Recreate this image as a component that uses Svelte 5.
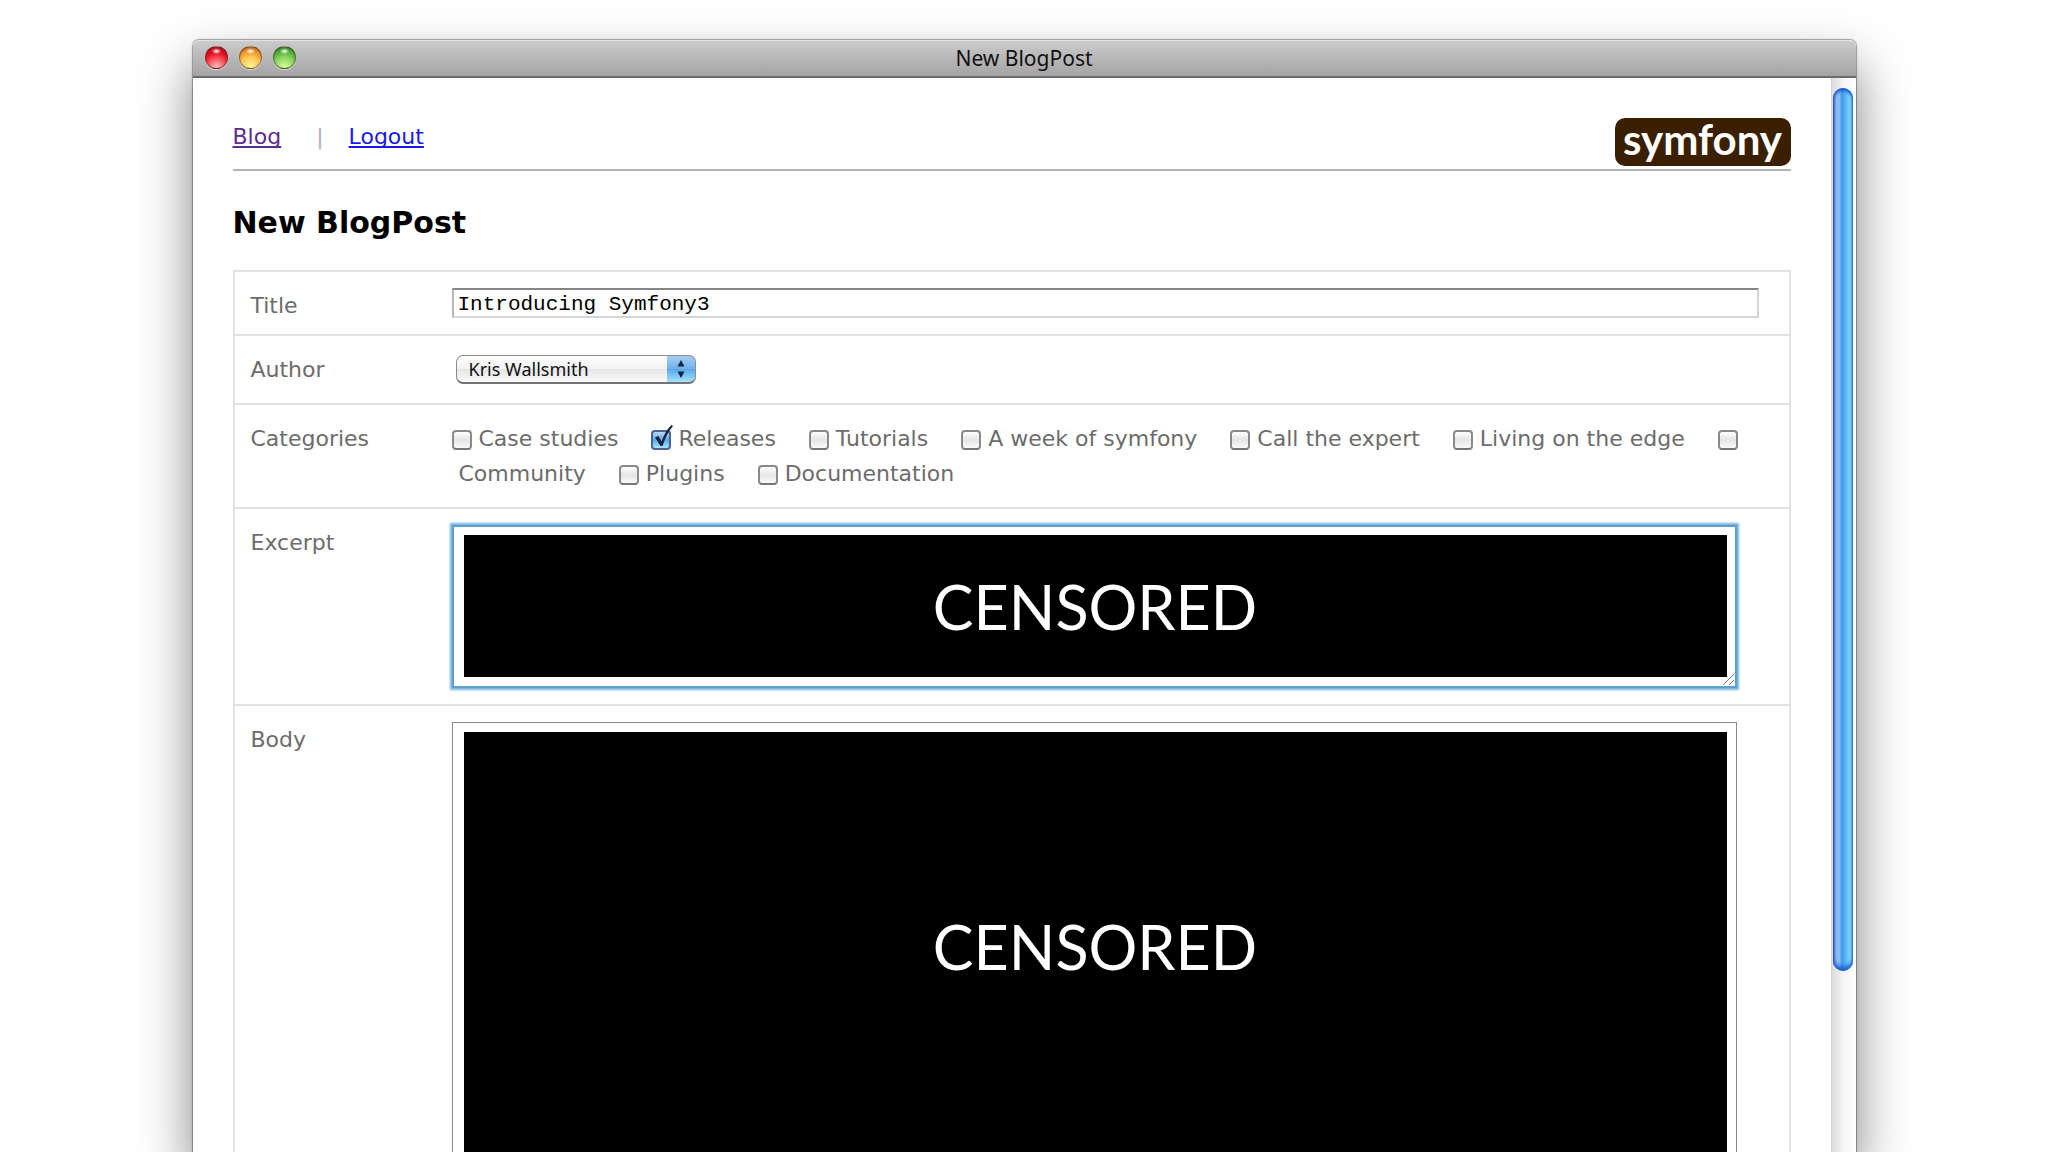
<script lang="ts">
	type Category = { id: string; name: string; checked: boolean };

	let title = $state('Introducing Symfony3');
	let author = $state('Kris Wallsmith');
	let excerpt = $state('');
	let body = $state('');

	let categories: Category[] = $state([
		{ id: 'case-studies', name: 'Case studies', checked: false },
		{ id: 'releases', name: 'Releases', checked: true },
		{ id: 'tutorials', name: 'Tutorials', checked: false },
		{ id: 'week', name: 'A week of symfony', checked: false },
		{ id: 'expert', name: 'Call the expert', checked: false },
		{ id: 'edge', name: 'Living on the edge', checked: false },
		{ id: 'community', name: 'Community', checked: false },
		{ id: 'plugins', name: 'Plugins', checked: false },
		{ id: 'documentation', name: 'Documentation', checked: false }
	]);
</script>

<div class="desktop">
	<div class="window">
		<div class="titlebar">
			<div class="lights">
				<button class="light red" aria-label="Close"></button>
				<button class="light yellow" aria-label="Minimize"></button>
				<button class="light green" aria-label="Zoom"></button>
			</div>
			<span class="window-title">New BlogPost</span>
		</div>

		<div class="view">
			<main>
				<header>
					<nav>
						<a class="visited" href="#blog">Blog</a>
						<span class="separator">|</span>
						<a href="#logout">Logout</a>
					</nav>
					<div class="logo">symfony</div>
				</header>

				<h1>New BlogPost</h1>

				<form onsubmit={(e) => e.preventDefault()}>
					<div class="row">
						<label for="title">Title</label>
						<div class="field">
							<input id="title" class="text" type="text" bind:value={title} />
						</div>
					</div>

					<div class="row">
						<label for="author">Author</label>
						<div class="field">
							<div class="select">
								<select id="author" bind:value={author}>
									<option>Kris Wallsmith</option>
								</select>
								<svg viewBox="0 0 28 28" aria-hidden="true">
									<path d="M10.500 11.500 14 5l3.500 6.500zM10.500 16.500h7L14 23z" fill="#10263f" />
								</svg>
							</div>
						</div>
					</div>

					<div class="row">
						<span class="label" id="categories">Categories</span>
						<div class="field categories" role="group" aria-labelledby="categories">
							{#each categories as category (category.id)}
								<span class="check">
									<input id={category.id} type="checkbox" bind:checked={category.checked} />
									{#if category.checked}
										<svg viewBox="0 0 24 26" aria-hidden="true">
											<path d="M4 13.500 7.500 12l3 5.500C13 10.500 16.500 4.500 20.500 1l1.500 1C17.500 7.500 14 14 11.500 22H9.500z" fill="#14243c" />
										</svg>
									{/if}
								</span><wbr /><label for={category.id}>&nbsp;{category.name}</label>
							{/each}
						</div>
					</div>

					<div class="row">
						<label for="excerpt">Excerpt</label>
						<div class="field">
							<div class="area focused">
								<textarea id="excerpt" bind:value={excerpt}></textarea>
								<div class="censored">CENSORED</div>
								<svg class="grip" viewBox="0 0 13 13" aria-hidden="true">
									<path d="M1 12 12 1M7 12l5-5" stroke="#777" fill="none" />
								</svg>
							</div>
						</div>
					</div>

					<div class="row">
						<label for="body">Body</label>
						<div class="field">
							<div class="area tall">
								<textarea id="body" bind:value={body}></textarea>
								<div class="censored">CENSORED</div>
							</div>
						</div>
					</div>
				</form>
			</main>

			<div class="scrollbar">
				<div class="thumb"></div>
			</div>
		</div>
	</div>
</div>

<style>
	:global(body) {
		background: #fff;
	}

	.desktop {
		height: 100vh;
		overflow: hidden;
		box-sizing: border-box;
		padding: 40px 9.4% 0;
		font-family: Verdana, 'DejaVu Sans', sans-serif;
		font-size: 22px;
		line-height: 35px;
		color: #6c6c6c;
	}

	.window {
		height: 100%;
		display: flex;
		flex-direction: column;
		border-radius: 6px 6px 0 0;
		background: #fff;
		box-shadow:
			0 0 1px 1px rgba(0, 0, 0, 0.35),
			0 26px 52px 0 rgba(0, 0, 0, 0.5);
	}

	.titlebar {
		display: grid;
		grid-template-columns: 1fr auto 1fr;
		align-items: center;
		height: 35px;
		border-top: 1px solid #e2e2e2;
		border-bottom: 2px solid #6c6a6b;
		border-radius: 6px 6px 0 0;
		background: linear-gradient(#cbcbcb, #a5a3a4);
		flex: none;
	}

	.window-title {
		font-family: 'Lucida Grande', 'Noto Sans', sans-serif;
		font-size: 21px;
		color: #111;
	}

	.lights {
		display: flex;
		gap: 11px;
		padding: 0 0 2px 12px;
	}

	.light {
		box-sizing: border-box;
		width: 23px;
		height: 23px;
		padding: 0;
		border: 1px solid rgba(70, 40, 30, 0.5);
		border-radius: 50%;
		box-shadow: 0 1px 1px rgba(255, 255, 255, 0.6);
	}

	.red {
		background:
			radial-gradient(ellipse 5px 3px at 50% 20%, #fff, transparent),
			radial-gradient(circle at 50% 95%, #ffc2c2 0%, #f5404a 45%, #e30a22 65%, #8c2020 100%);
	}

	.yellow {
		background:
			radial-gradient(ellipse 5px 3px at 50% 20%, #fff, transparent),
			radial-gradient(circle at 50% 95%, #fff69a 0%, #fcc655 45%, #ef9128 70%, #94501c 100%);
	}

	.green {
		background:
			radial-gradient(ellipse 5px 3px at 50% 20%, #fff, transparent),
			radial-gradient(circle at 50% 95%, #d5ff9e 0%, #8bd45c 45%, #4fae35 70%, #2c6420 100%);
	}

	.view {
		flex: 1;
		min-height: 0;
		display: flex;
		overflow: hidden;
	}

	main {
		flex: 1;
		min-width: 0;
		padding: 40px 40px 0;
	}

	header {
		display: flex;
		justify-content: space-between;
		align-items: center;
		padding-bottom: 3px;
		border-bottom: 2px solid #b5b5b5;
	}

	nav {
		display: flex;
		padding-bottom: 12px;
	}

	nav a {
		color: #1a1ae6;
		text-decoration-thickness: 2px;
		text-underline-offset: 2px;
		text-decoration-skip-ink: none;
	}

	nav .visited {
		color: #5b2d8c;
	}

	.separator {
		padding: 0 25px 0 35px;
		color: #b5abb5;
	}

	.logo {
		width: 176px;
		height: 48px;
		border-radius: 10px;
		background: #3a1f00;
		color: #fff;
		font-family: Lato, sans-serif;
		font-size: 42px;
		font-weight: 700;
		line-height: 42px;
		text-align: center;
	}

	h1 {
		margin: 34px 0 29px;
		font-size: 30px;
		line-height: 36px;
		color: #000;
	}

	form {
		border: 2px solid #e3e1e4;
		border-top: 0;
	}

	.row {
		display: flex;
		padding: 16px 30px 16px 16px;
		border-top: 2px solid #e3e1e4;
	}

	.row > label,
	.label {
		flex: none;
		width: 201px;
	}

	.field {
		flex: 1;
		min-width: 0;
	}

	.row:first-child {
		height: 30px;
	}

	.text {
		display: block;
		box-sizing: border-box;
		width: 100%;
		height: 30px;
		padding: 2px 4px 0;
		border: 2px solid #d6d4d6;
		border-top-color: #858585;
		border-left-color: #b5b5b5;
		background: #fff;
		color: #000;
		font-family: 'Courier New', 'Liberation Mono', monospace;
		font-size: 21px;
		outline: none;
	}

	.select {
		position: relative;
		width: 240px;
		height: 35px;
		margin-left: 4px;
		display: flex;
		align-items: center;
	}

	select {
		appearance: none;
		width: 100%;
		height: 29px;
		padding: 0 30px 0 12px;
		border: 1px solid #8d8d8d;
		border-bottom: 2px solid #747474;
		border-radius: 7px;
		background:
			linear-gradient(#a9ccf2, #6db2ef 50%, #57a8ec 51%, #a4e2fd) right / 28px 100% no-repeat,
			linear-gradient(#fff, #f2f2f2 50%, #e6e6e6 51%, #fafafa);
		color: #111;
		font-family: 'Lucida Grande', 'Noto Sans', sans-serif;
		font-size: 18px;
	}

	.select svg {
		position: absolute;
		right: 1px;
		top: 3px;
		width: 28px;
		height: 28px;
		pointer-events: none;
	}

	.check {
		position: relative;
		display: inline-block;
		width: 20px;
		height: 20px;
		vertical-align: -4px;
	}

	.check input {
		appearance: none;
		display: block;
		box-sizing: border-box;
		width: 20px;
		height: 20px;
		margin: 0;
		border: 2px solid #8a8a8a;
		border-bottom-color: #757575;
		border-radius: 4px;
		background: linear-gradient(#fff, #e6e4e6 50%, #fafafa);
	}

	.check input:checked {
		border-color: #4a6690;
		background: linear-gradient(#bcd8f5, #5aa9ec 50%, #a8e6ff);
	}

	.check svg {
		position: absolute;
		left: 0;
		bottom: 0;
		width: 24px;
		height: 26px;
		pointer-events: none;
	}

	.categories label {
		margin-right: 33px;
	}

	.area {
		position: relative;
		height: 163px;
		margin-right: 22px;
	}

	.tall {
		height: 450px;
	}

	textarea {
		display: block;
		box-sizing: border-box;
		width: 100%;
		height: 100%;
		padding: 4px;
		border: 1px solid #8b898c;
		background: #fff;
		font-family: 'Courier New', 'Liberation Mono', monospace;
		font-size: 21px;
		resize: none;
		outline: none;
	}

	.focused textarea {
		border: 2px solid #5f9fd0;
		box-shadow: 0 0 2px 2px #74b4e4;
	}

	.censored {
		position: absolute;
		inset: 10px 10px 11px 12px;
		display: flex;
		align-items: center;
		justify-content: center;
		background: #000;
		color: #fff;
		font-family: 'Gill Sans', Lato, sans-serif;
		font-size: 61px;
	}

	.grip {
		position: absolute;
		right: 2px;
		bottom: 2px;
		width: 13px;
		height: 13px;
	}

	.scrollbar {
		flex: none;
		width: 25px;
		padding: 10px 3px 0 1px;
		box-sizing: border-box;
		border-left: 1px solid #d0d0d0;
		background: linear-gradient(90deg, #dcdcdc, #f6f6f6 50%, #fff);
	}

	.thumb {
		height: 83%;
		border-radius: 10px;
		background: linear-gradient(90deg, #2b50c8 0%, #8fbdf2 14%, #8dbcf2 32%, #3d97ec 44%, #62bdf6 68%, #90e2ff 90%, #4a8fb5 100%);
		box-shadow: inset 0 3px 3px #1d60d0, inset 0 -4px 4px #1d60d0;
	}
</style>
